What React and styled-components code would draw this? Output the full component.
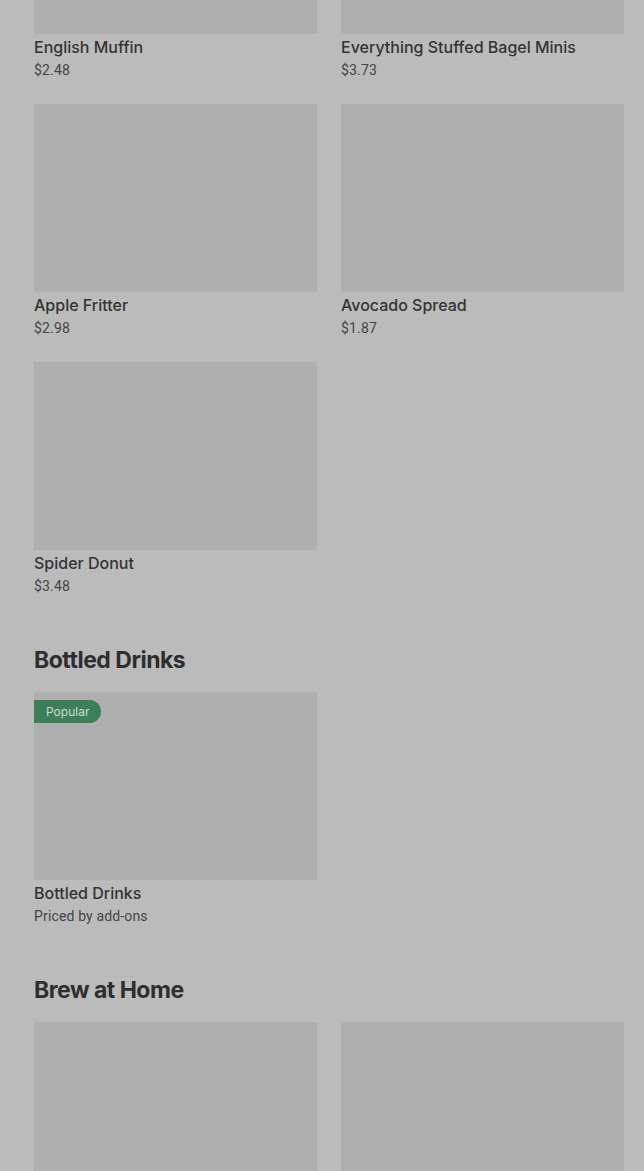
import React from "react";
import styled, { createGlobalStyle } from "styled-components";

const Global = createGlobalStyle`
  html, body { margin: 0; padding: 0; background: #bbbbbb; }
  body { font-family: Inter, "Noto Sans", sans-serif; overflow: hidden; }
`;

const Page = styled.div`
  padding: 0 20px 0 34px;
  margin-top: -154px;
  display: flex;
  flex-direction: column;
`;

const Section = styled.section`
  display: flex;
  flex-direction: column;
  padding-bottom: ${(p) => (p.$last ? 0 : 48)}px;
`;

const Heading = styled.h2`
  margin: 0 0 16px;
  font-size: 23px;
  line-height: 32px;
  font-weight: 700;
  color: #2e2e2e;
  letter-spacing: -0.5px;
`;

const Grid = styled.div`
  display: grid;
  grid-template-columns: 283px 283px;
  column-gap: 24px;
  row-gap: 24px;
`;

const Card = styled.div`
  display: flex;
  flex-direction: column;
`;

const Thumb = styled.div`
  position: relative;
  height: 188px;
  background: #afafaf;
`;

const Badge = styled.span`
  position: absolute;
  left: 0;
  top: 8px;
  height: 23px;
  padding: 0 12px;
  display: flex;
  align-items: center;
  background: #3d7f5b;
  color: #c9dccf;
  font-size: 12px;
  border-radius: 0 12px 12px 0;
`;

const Title = styled.div`
  margin-top: 2px;
  font-size: 16px;
  line-height: 22px;
  font-weight: 500;
  color: #333333;
`;

const Sub = styled.div`
  margin-top: 2px;
  font-size: 14px;
  line-height: 20px;
  color: #444444;
  font-family: Roboto, sans-serif;
  letter-spacing: 0.15px;
`;

const Item = ({ title, sub, badge }) => (
  <Card>
    <Thumb>{badge && <Badge>{badge}</Badge>}</Thumb>
    <Title>{title}</Title>
    <Sub>{sub}</Sub>
  </Card>
);

export default function App() {
  return (
    <>
      <Global />
      <Page>
        <Section>
          <Grid>
            <Item title="English Muffin" sub="$2.48" />
            <Item title="Everything Stuffed Bagel Minis" sub="$3.73" />
            <Item title="Apple Fritter" sub="$2.98" />
            <Item title="Avocado Spread" sub="$1.87" />
            <Item title="Spider Donut" sub="$3.48" />
          </Grid>
        </Section>
        <Section>
          <Heading>Bottled Drinks</Heading>
          <Grid>
            <Item title="Bottled Drinks" sub="Priced by add-ons" badge="Popular" />
          </Grid>
        </Section>
        <Section $last>
          <Heading>Brew at Home</Heading>
          <Grid>
            <Item title="" sub="" />
            <Item title="" sub="" />
          </Grid>
        </Section>
      </Page>
    </>
  );
}
